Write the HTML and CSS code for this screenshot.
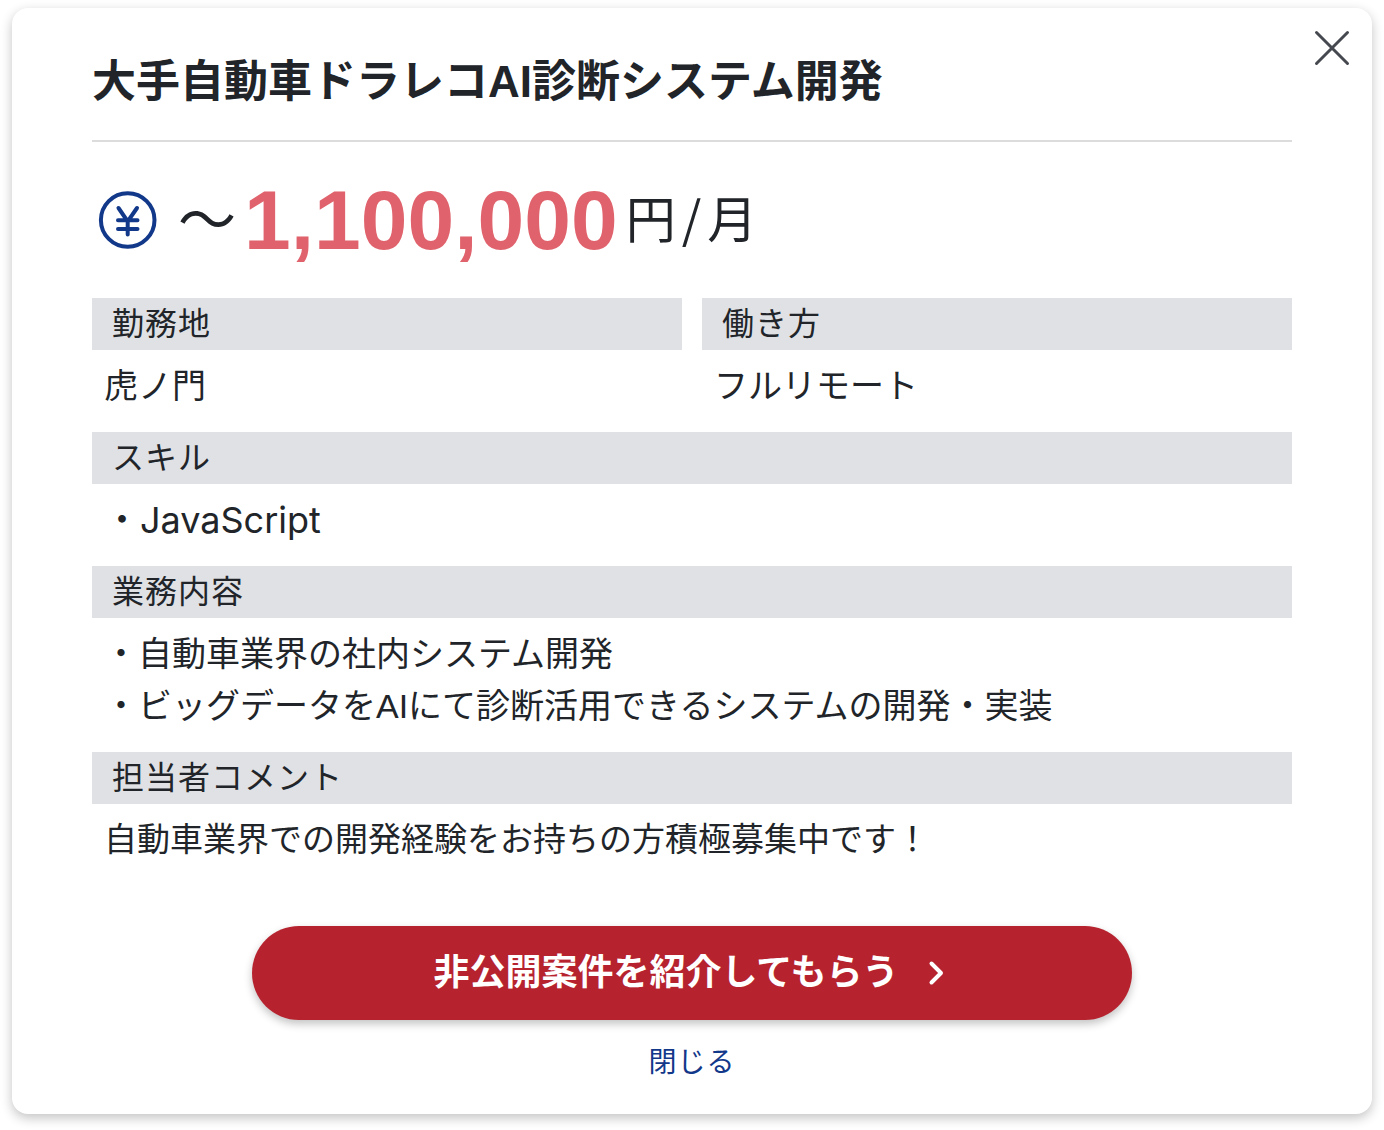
FILE: index.html
```
<!DOCTYPE html>
<html lang="ja">
<head>
  <meta charset="UTF-8" />
  <meta name="viewport" content="width=device-width, initial-scale=1.0"/>
  <title>大手自動車ドラレコAI診断システム開発</title>
  <link rel="stylesheet" href="styles.css">
</head>
<body>
  <div class="modal" role="dialog" aria-labelledby="job-title">
    <button class="modal-close" type="button" aria-label="閉じる">
      <svg viewBox="0 0 36 36" width="36" height="36">
        <path d="M2.5 2.5 L33.5 33.5 M33.5 2.5 L2.5 33.5"/>
      </svg>
    </button>
    <h1 class="job-title" id="job-title">大手自動車ドラレコAI診断システム開発</h1>
    <div class="price">
      <svg class="price-icon" viewBox="0 0 60 60" width="60" height="60">
        <circle cx="29.7" cy="30" r="26.8"/>
        <path d="M20.5 18 L29.7 31.5 L39 18 M29.7 31.5 V44.5 M20 30.2 H39.5 M20 39 H39.5"/>
      </svg>
      <span class="price-wave">～</span>
      <strong class="price-num">1,100,000</strong>
      <span class="price-unit">円/月</span>
    </div>
    <div class="row">
      <section class="item">
        <h2>勤務地</h2>
        <p>虎ノ門</p>
      </section>
      <section class="item">
        <h2>働き方</h2>
        <p>フルリモート</p>
      </section>
    </div>
    <section class="item">
      <h2>スキル</h2>
      <ul class="skills">
        <li>・JavaScript</li>
      </ul>
    </section>
    <section class="item">
      <h2>業務内容</h2>
      <ul>
        <li>・自動車業界の社内システム開発</li>
        <li>・ビッグデータをAIにて診断活用できるシステムの開発・実装</li>
      </ul>
    </section>
    <section class="item">
      <h2>担当者コメント</h2>
      <p class="comment">自動車業界での開発経験をお持ちの方積極募集中です！</p>
    </section>
    <div class="actions">
      <button class="btn-cta" type="button">
        <span>非公開案件を紹介してもらう</span>
        <svg viewBox="0 0 24 26" width="24" height="26">
          <path d="M4.5 3.5 L14 13 L4.5 22.5"/>
        </svg>
      </button>
      <a class="link-close" href="#">閉じる</a>
    </div>
  </div>
</body>
</html>
```

FILE: styles.css
```
* {
  box-sizing: border-box;
}
body {
  margin: 0;
  padding: 8px 12px 16px;
  background: #fff;
  color: #212529;
  font-family: "Liberation Sans", "Noto Sans CJK JP", sans-serif;
}
h1, h2, p, ul {
  margin: 0;
  padding: 0;
}
/* --- モーダル --- */
.modal {
  position: relative;
  padding: 0 80px 32px;
  background: #fff;
  border-radius: 16px;
  box-shadow: 0 4px 12px rgba(0, 0, 0, 0.24);
}
.modal-close {
  position: absolute;
  top: 22px;
  right: 22px;
  display: flex;
  padding: 0;
  border: 0;
  background: none;
  cursor: pointer;
}
.modal-close path {
  fill: none;
  stroke: #45484e;
  stroke-width: 3;
  stroke-linecap: round;
}
.job-title {
  padding: 42px 0 26px;
  border-bottom: 2px solid #dcdcdd;
  font-size: 44px;
  line-height: 64px;
  font-weight: bold;
}
/* --- 単価 --- */
.price {
  display: flex;
  align-items: center;
  height: 156px;
  padding-left: 6px;
}
.price-icon {
  margin-right: 20px;
}
.price-icon circle,
.price-icon path {
  fill: none;
  stroke: #12388a;
  stroke-width: 4;
  stroke-linecap: round;
}
.price-wave,
.price-unit {
  padding-bottom: 8px;
  font-family: "Noto Sans CJK JP", sans-serif;
  line-height: 60px;
}
.price-wave {
  font-size: 58px;
}
.price-num {
  margin: 0 8px;
  color: #e0626c;
  font-size: 84px;
  line-height: 96px;
}
.price-unit {
  font-size: 50px;
  letter-spacing: 6px;
}
/* --- 案件情報 --- */
.row {
  display: grid;
  grid-template-columns: 1fr 1fr;
  gap: 20px;
}
.item h2 {
  padding: 0 20px;
  background: #e0e1e5;
  font-size: 32px;
  line-height: 52px;
  font-weight: normal;
  letter-spacing: 1px;
}
.item p,
.item ul {
  padding: 10px 12px 20px;
  font-size: 34px;
  line-height: 52px;
}
.item ul {
  list-style: none;
}
.item .skills {
  font-family: Inter, "Noto Sans CJK JP", sans-serif;
  font-size: 36px;
}
.item .comment {
  font-size: 33px;
}
/* --- ボタン --- */
.actions {
  display: flex;
  flex-direction: column;
  align-items: center;
  gap: 24px;
  padding-top: 40px;
}
.btn-cta {
  display: flex;
  align-items: center;
  justify-content: center;
  gap: 28px;
  width: 100%;
  max-width: 880px;
  height: 94px;
  padding: 0;
  border: 0;
  border-radius: 47px;
  background: #b6232e;
  box-shadow: 0 4px 8px rgba(0, 0, 0, 0.24);
  color: #fff;
  font-family: inherit;
  font-size: 36px;
  font-weight: bold;
  cursor: pointer;
}
.btn-cta span {
  line-height: 52px;
}
.btn-cta path {
  fill: none;
  stroke: #fff;
  stroke-width: 4;
  stroke-linecap: round;
  stroke-linejoin: round;
}
.link-close {
  color: #12388a;
  font-size: 28px;
  line-height: 38px;
  letter-spacing: 1px;
  text-decoration: none;
}
```
